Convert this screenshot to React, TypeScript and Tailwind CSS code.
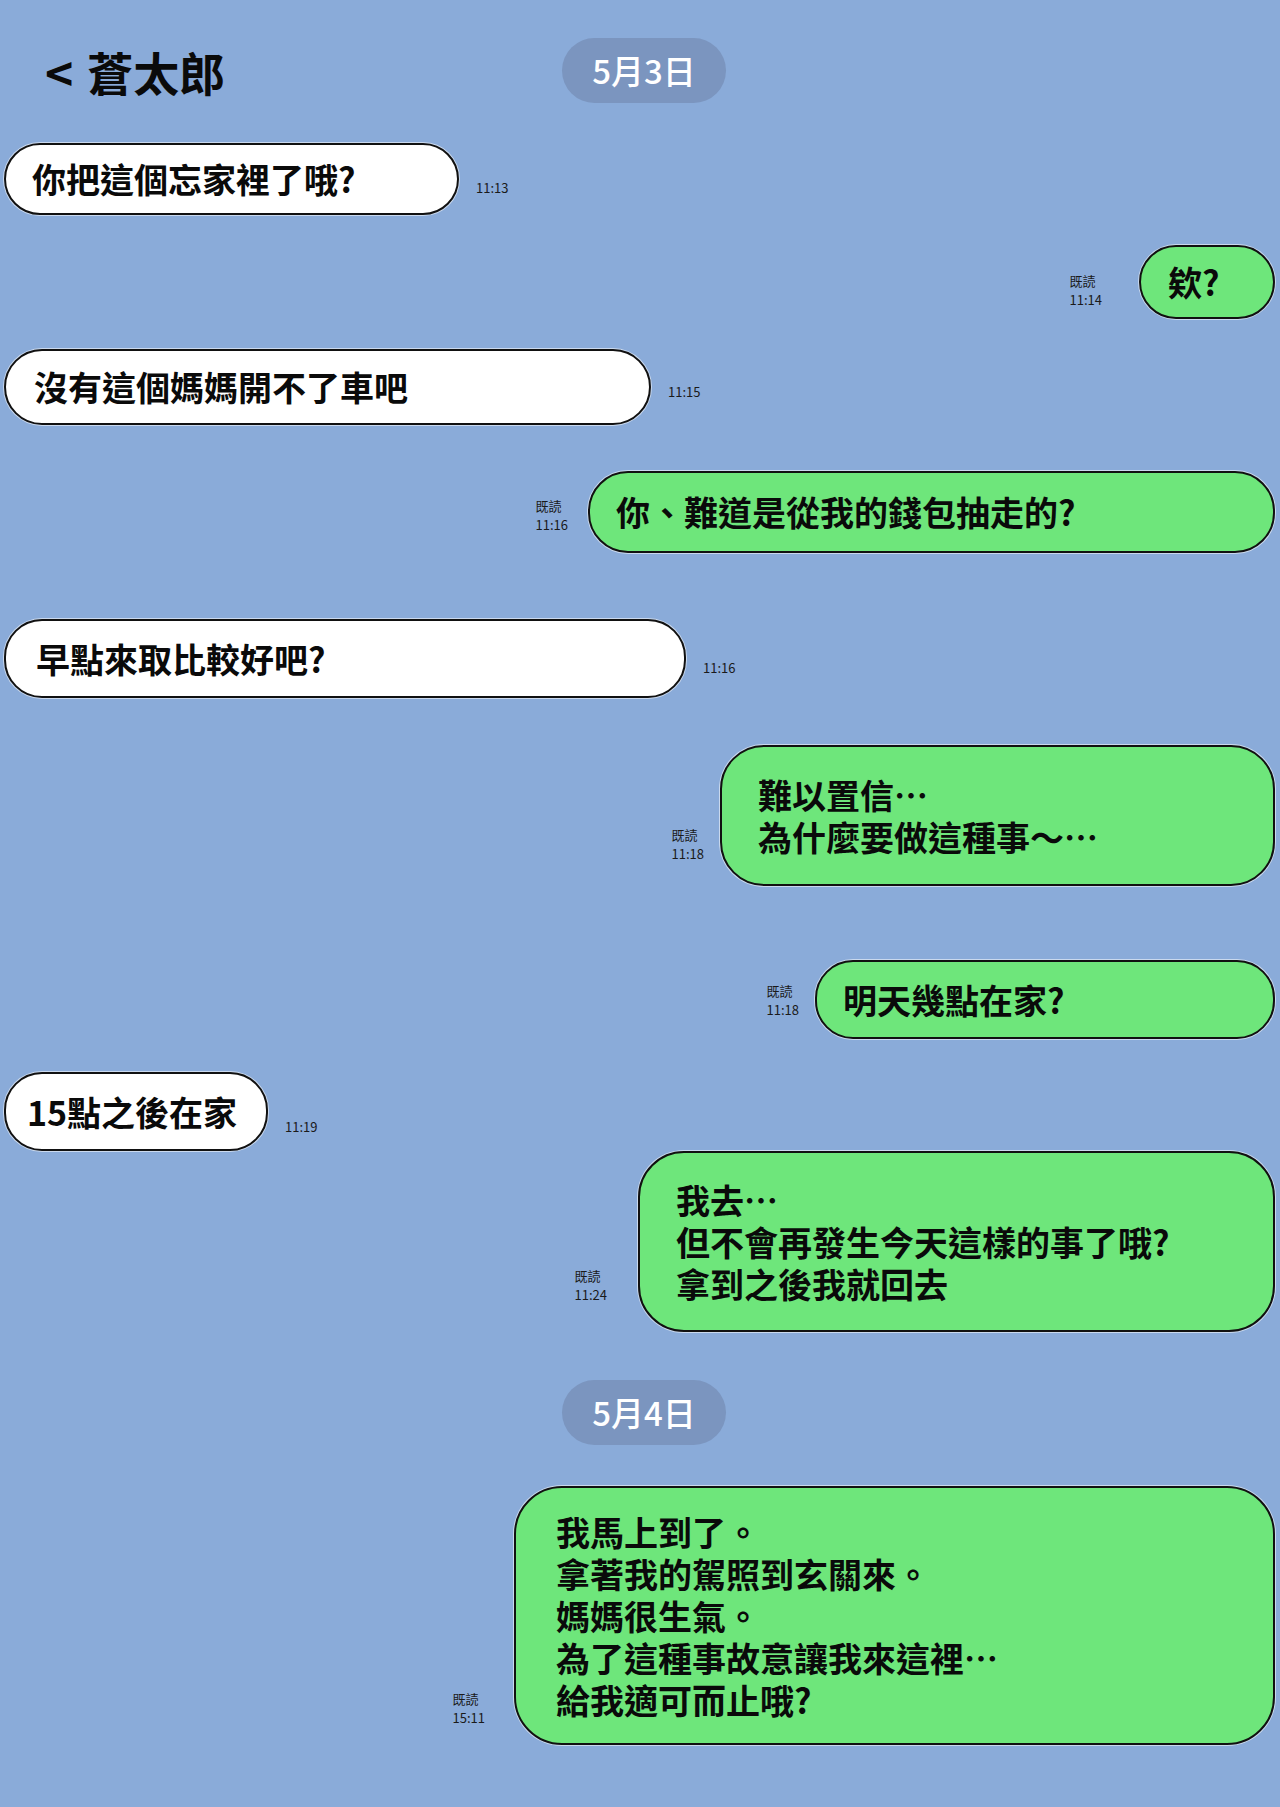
import React from "react";

type LeftProps = { text: string; time: string; w: string; h: string; pl: string; mt: string; tmb: string };
type RightProps = { lines: string[]; time: string; w: string; h: string; pl: string; mt: string; gap: string; lmb: string; rounded: string };

function Left({ text, time, w, h, pl, mt, tmb }: LeftProps) {
  return (
    <div className={`flex items-end ${mt}`}>
      <div
        className={`flex items-center bg-white border-2 border-[#111] rounded-[38px] shadow-[0_0_0_1px_rgba(255,255,255,0.55)] text-[34px] font-bold leading-[42px] text-[#0a0a0a] ${w} ${h} ${pl}`}
      >
        {text}
      </div>
      <span className={`ml-[17px] text-[13px] leading-[16px] text-[#1a1a1a] ${tmb}`}>{time}</span>
    </div>
  );
}

function Right({ lines, time, w, h, pl, mt, gap, lmb, rounded }: RightProps) {
  return (
    <div className={`flex items-end justify-end ${mt}`}>
      <div className={`flex flex-col text-[13px] leading-[19px] text-[#1a1a1a] ${gap} ${lmb}`}>
        <span>既読</span>
        <span>{time}</span>
      </div>
      <div
        className={`flex flex-col justify-center bg-[#6ee67b] border-2 border-[#111] shadow-[0_0_0_1px_rgba(255,255,255,0.55)] text-[34px] font-bold leading-[42px] text-[#0a0a0a] ${rounded} ${w} ${h} ${pl}`}
      >
        {lines.map((l, i) => (
          <div key={i} className="h-[42px] leading-[42px]">
            {l}
          </div>
        ))}
      </div>
    </div>
  );
}

function DatePill({ text }: { text: string }) {
  return (
    <div className="flex items-center justify-center w-[164px] h-[65px] rounded-full bg-[#7b95bf] text-white text-[33px] font-medium">
      {text}
    </div>
  );
}

export default function App() {
  return (
    <div className="min-h-[1807px] w-[1280px] bg-[#8aabd9] font-['Noto_Sans_CJK_TC','Noto_Sans_CJK_JP',sans-serif] overflow-hidden">
      <div className="flex flex-col pl-[4px] pr-[5px] pt-[38px]">
        <div className="relative flex items-center h-[65px]">
          <div className="pl-[41px] flex items-center text-[46px] font-bold text-[#0a0a0a] leading-none">
            <span className="mr-[14px] text-[48px] font-semibold">&lt;</span>
            <span>蒼太郎</span>
          </div>
          <div className="absolute left-[558px] top-0">
            <DatePill text="5月3日" />
          </div>
        </div>

        <Left text="你把這個忘家裡了哦?" time="11:13" w="w-[455px]" h="h-[72px]" pl="pl-[26px]" mt="mt-[40px]" tmb="mb-[19px]" />
        <Right lines={["欸?"]} time="11:14" w="w-[136px]" h="h-[74px]" pl="pl-[27px]" mt="mt-[30px]" gap="mr-[37px]" lmb="mb-[10px]" rounded="rounded-[38px]" />
        <Left text="沒有這個媽媽開不了車吧" time="11:15" w="w-[647px]" h="h-[76px]" pl="pl-[28px]" mt="mt-[30px]" tmb="mb-[25px]" />
        <Right lines={["你、難道是從我的錢包抽走的?"]} time="11:16" w="w-[687px]" h="h-[82px]" pl="pl-[26px]" mt="mt-[46px]" gap="mr-[20px]" lmb="mb-[19px]" rounded="rounded-[40px]" />
        <Left text="早點來取比較好吧?" time="11:16" w="w-[682px]" h="h-[79px]" pl="pl-[30px]" mt="mt-[66px]" tmb="mb-[22px]" />
        <Right lines={["難以置信…", "為什麼要做這種事〜…"]} time="11:18" w="w-[555px]" h="h-[141px]" pl="pl-[36px]" mt="mt-[47px]" gap="mr-[16px]" lmb="mb-[23px]" rounded="rounded-[44px]" />
        <Right lines={["明天幾點在家?"]} time="11:18" w="w-[460px]" h="h-[79px]" pl="pl-[26px]" mt="mt-[74px]" gap="mr-[16px]" lmb="mb-[20px]" rounded="rounded-[38px]" />
        <Left text="15點之後在家" time="11:19" w="w-[264px]" h="h-[79px]" pl="pl-[21px]" mt="mt-[33px]" tmb="mb-[16px]" />
        <Right lines={["我去…", "但不會再發生今天這樣的事了哦?", "拿到之後我就回去"]} time="11:24" w="w-[637px]" h="h-[181px]" pl="pl-[36px]" mt="mt-0" gap="mr-[31px]" lmb="mb-[28px]" rounded="rounded-[46px]" />

        <div className="flex pl-[558px] mt-[48px]">
          <DatePill text="5月4日" />
        </div>

        <Right
          lines={["我馬上到了。", "拿著我的駕照到玄關來。", "媽媽很生氣。", "為了這種事故意讓我來這裡…", "給我適可而止哦?"]}
          time="15:11"
          w="w-[761px]"
          h="h-[259px]"
          pl="pl-[40px]"
          mt="mt-[41px]"
          gap="mr-[29px]"
          lmb="mb-[18px]"
          rounded="rounded-[48px]"
        />
      </div>
    </div>
  );
}
